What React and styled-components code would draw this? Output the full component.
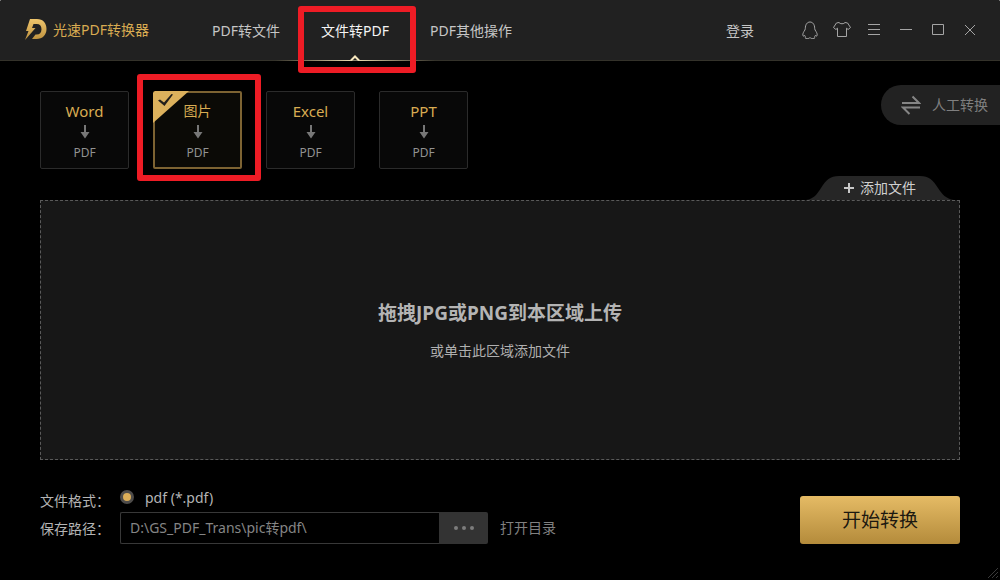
import React from "react";
import styled, { createGlobalStyle, css } from "styled-components";

const GlobalStyle = createGlobalStyle`
  *, *::before, *::after { box-sizing: border-box; }
  body { margin: 0; background: #fff; }
  body, button, input {
    font-family: "Noto Sans", "Noto Sans CJK SC", sans-serif;
    font-size: 14px;
  }
  button { padding: 0; border: 0; background: none; color: inherit; cursor: pointer; }
  svg { display: block; flex: none; }
`;

const Window = styled.div`
  position: relative;
  display: flex;
  flex-direction: column;
  min-height: 100vh;
  background: #000;
  border-radius: 2px 2px 0 0;
  line-height: 20px;
`;

const Header = styled.header`
  display: flex;
  align-items: stretch;
  height: 61px;
  padding: 0 14px 0 24px;
  background: #212121;
  border-bottom: 1px solid #34322a;
  border-radius: 2px 2px 0 0;
`;

const Brand = styled.div`
  display: flex;
  align-items: center;
  gap: 5px;
  width: 188px;
  color: #d9ac52;
`;

const Nav = styled.nav`
  display: flex;
  gap: 41px;
  flex: 1;
`;

const Tab = styled.a`
  position: relative;
  display: flex;
  align-items: center;
  padding-top: 2px;
  white-space: nowrap;
  text-decoration: none;
  color: ${(p) => (p.$active ? "#f4f4f4" : "#c6c6c6")};
`;

const TabMarker = styled.svg`
  position: absolute;
  left: 50%;
  bottom: -1px;
  transform: translateX(-50%);
`;

const Highlight = styled.span`
  position: absolute;
  z-index: 2;
  border: 6px solid #ee1c25;
  border-radius: 3px;
  pointer-events: none;
  inset: ${(p) => p.$inset};
`;

const Login = styled.button`
  margin-right: 40px;
  color: #c6c6c6;
`;

const WindowButtons = styled.div`
  display: flex;
`;

const IconButton = styled.button`
  display: grid;
  place-items: center;
  width: 32px;
  color: #a5a5a5;
`;

const Tools = styled.section`
  display: flex;
  justify-content: space-between;
  align-items: flex-start;
  padding: 24px 0 0 40px;
`;

const Cards = styled.div`
  display: flex;
  gap: 24px;
  padding-top: 6px;
`;

const Card = styled.button`
  position: relative;
  display: flex;
  flex-direction: column;
  align-items: center;
  width: 89px;
  height: 78px;
  padding-top: 10px;
  border: 1px solid #2b2b2b;
  border-radius: 2px;
  background: #080808;
  ${(p) =>
    p.$selected &&
    css`
      padding-top: 9px;
      border: 2px solid #7d6332;
      background: #0b0a06;
    `}
`;

const Source = styled.span`
  height: 20px;
  font-size: ${(p) => (p.$latin ? 15 : 14)}px;
  line-height: 18px;
  color: #d9ac52;
`;

const Target = styled.span`
  height: 20px;
  font-size: 12px;
  line-height: 20px;
  color: #929292;
`;

const ArrowIcon = styled.svg`
  margin: 3px 0 4px;
`;

const Corner = styled.svg`
  position: absolute;
  top: -2px;
  left: -2px;
`;

const ManualButton = styled.button`
  display: flex;
  align-items: center;
  gap: 11px;
  height: 40px;
  padding: 0 12px 0 20px;
  border-radius: 20px 0 0 20px;
  background: #222;
  line-height: 20px;
  color: #7f7f7f;
`;

const Main = styled.main`
  display: flex;
  flex-direction: column;
  flex: 1;
  padding: 7px 40px 0;
`;

const AddButton = styled.button`
  position: relative;
  display: flex;
  align-items: center;
  justify-content: center;
  align-self: flex-end;
  gap: 6px;
  width: 148px;
  height: 24px;
  margin-right: 6px;
  color: #d0d0d0;
`;

const AddShape = styled.svg`
  position: absolute;
  inset: 0;
`;

const AddLabel = styled.span`
  position: relative;
  line-height: 20px;
`;

const PlusIcon = styled.svg`
  position: relative;
`;

const DropZone = styled.button`
  display: flex;
  flex-direction: column;
  align-items: center;
  justify-content: center;
  gap: 16px;
  flex: 1;
  min-height: 260px;
  padding-top: 2px;
  border: 1px dashed #5a5a5a;
  background: #171717;
`;

const DropTitle = styled.strong`
  font-size: 19px;
  line-height: 24px;
  color: #b4b4b4;
`;

const DropHint = styled.span`
  line-height: 20px;
  color: #b0b0b0;
`;

const Footer = styled.footer`
  display: flex;
  justify-content: space-between;
  align-items: flex-end;
  padding: 24px 40px 36px;
`;

const Fields = styled.div`
  display: grid;
  grid-template-columns: 80px 1fr;
  grid-template-rows: 28px 32px;
  align-items: center;
`;

const FieldLabel = styled.label`
  padding-top: ${(p) => (p.$low ? 6 : 2)}px;
  color: #b4b4b4;
`;

const RadioLabel = styled.label`
  display: flex;
  align-items: center;
  gap: 11px;
  color: #b4b4b4;
`;

const Radio = styled.input`
  appearance: none;
  width: 14px;
  height: 14px;
  margin: 0 0 2px;
  border: 3px solid #4e4c4a;
  border-radius: 50%;
  background: #dcae58;
`;

const PathRow = styled.div`
  display: flex;
  align-items: center;
`;

const PathInput = styled.input`
  width: 319px;
  height: 32px;
  padding: 0 9px 2px;
  border: 1px solid #383838;
  border-right: 0;
  border-radius: 2px 0 0 2px;
  background: #000;
  color: #858585;
  outline: none;
`;

const BrowseButton = styled.button`
  display: grid;
  place-items: center;
  width: 49px;
  height: 32px;
  margin-right: 12px;
  border-radius: 0 2px 2px 0;
  background: #333;
`;

const OpenLink = styled.a`
  color: #808080;
  text-decoration: none;
`;

const StartButton = styled.button`
  width: 160px;
  height: 48px;
  padding-bottom: 2px;
  border-radius: 3px;
  background: linear-gradient(#e5bb65, #b48b3b);
  font-size: 19px;
  color: #1c1810;
`;

const Grip = styled.svg`
  position: absolute;
  right: 2px;
  bottom: 2px;
`;

const Logo = () => (
  <svg width="24" height="24" viewBox="0 0 24 24" aria-hidden="true">
    <defs>
      <linearGradient id="gold" x1="0" y1="0" x2="0" y2="1">
        <stop offset="0" stopColor="#efc56c" />
        <stop offset="1" stopColor="#bd913e" />
      </linearGradient>
    </defs>
    <path
      fill="url(#gold)"
      d="M6 1h7c6 0 9.500 4 9.500 10s-4 10-10 10H8l3.500-4.500h1.200c3 0 4.800-2 4.800-5.300S15.700 6 12.700 6H9.500L8 10h3.500L1 22l3.500-9H2z"
    />
  </svg>
);

const Arrow = () => (
  <ArrowIcon width="10" height="14" viewBox="0 0 10 14" aria-hidden="true">
    <path d="M4 0h2v7h3.500L5 13.500.5 7H4z" fill="#777" />
  </ArrowIcon>
);

const windowIcons = [
  {
    label: "QQ",
    art: (
      <path d="M4.300 7.600C4.300 3.400 6.300 1 9 1s4.700 2.400 4.700 6.600c0 1 .6 1.800 1.400 3 .9 1.400 1.400 3.200.9 4.200-.3.600-1 .1-1.500-.6-.3.900-.8 1.400-1.300 1.900.8.500.9 1.200-.3 1.400-1.500.3-3-.1-3.400-.6h-1c-.4.500-1.900.9-3.400.6-1.200-.2-1.100-.9-.3-1.400-.5-.5-1-1-1.300-1.900-.5.700-1.200 1.200-1.500.6-.5-1 0-2.800.9-4.200.8-1.200 1.400-2 1.400-3z" />
    ),
  },
  {
    label: "皮肤",
    art: (
      <path d="M6 1.500c.8 1.700 5.200 1.700 6 0l2.600.5 2.900 4.500-2.400 2-1.600-1.300v8.300h-9V7.200L2.900 8.500.5 6.500 3.400 2z" />
    ),
  },
  { label: "菜单", art: <path d="M3 3.500h12M3 8.500h12M3 13.500h12" /> },
  { label: "最小化", art: <path d="M3 8.500h12" /> },
  { label: "最大化", art: <path d="M3.500 3.500h11v10h-11z" /> },
  { label: "关闭", art: <path d="M4 4l10 10M14 4L4 14" /> },
];

const formats = [
  { name: "Word", latin: true },
  { name: "图片", latin: false },
  { name: "Excel", latin: true },
  { name: "PPT", latin: true },
];

export default function App() {
  return (
    <Window>
      <GlobalStyle />
      <Header>
        <Brand>
          <Logo />
          光速PDF转换器
        </Brand>
        <Nav>
          <Tab href="#from-pdf">PDF转文件</Tab>
          <Tab href="#to-pdf" $active aria-current="page">
            文件转PDF
            <TabMarker width="160" height="6" viewBox="0 0 160 6" aria-hidden="true">
              <defs>
                <linearGradient id="fade">
                  <stop offset="0" stopColor="#e9d6a4" stopOpacity="0" />
                  <stop offset=".5" stopColor="#f2e2b6" />
                  <stop offset="1" stopColor="#e9d6a4" stopOpacity="0" />
                </linearGradient>
              </defs>
              <rect y="5" width="160" height="1" fill="url(#fade)" />
              <path d="M76 5.500l4-4 4 4" fill="#212121" stroke="#f6e6bd" strokeWidth="2" />
            </TabMarker>
            <Highlight $inset="6px -27px -13px -23px" />
          </Tab>
          <Tab href="#more">PDF其他操作</Tab>
        </Nav>
        <Login type="button">登录</Login>
        <WindowButtons>
          {windowIcons.map((icon) => (
            <IconButton key={icon.label} type="button" aria-label={icon.label}>
              <svg width="18" height="18" viewBox="0 0 18 18" fill="none" stroke="currentColor">
                {icon.art}
              </svg>
            </IconButton>
          ))}
        </WindowButtons>
      </Header>

      <Tools>
        <Cards>
          {formats.map(({ name, latin }) => {
            const selected = name === "图片";
            return (
              <Card key={name} type="button" $selected={selected} aria-pressed={selected}>
                {selected && (
                  <Corner width="36" height="32" viewBox="0 0 36 32" aria-hidden="true">
                    <path d="M2 0h34L0 32V2z" fill="#dcb15c" />
                    <path d="M5 9.500l2-1 4 3L18.500 3l1.500.6L11.500 15z" fill="#221f1b" />
                  </Corner>
                )}
                <Source $latin={latin}>{name}</Source>
                <Arrow />
                <Target>PDF</Target>
                {selected && <Highlight $inset="-19px -21px -14px -18px" />}
              </Card>
            );
          })}
        </Cards>
        <ManualButton type="button">
          <svg width="20" height="20" viewBox="0 0 20 20" aria-hidden="true">
            <path d="M1 8h17L11.500 1.500M19 12.500H2L8.500 19" fill="none" stroke="#858585" strokeWidth="2" />
          </svg>
          人工转换
        </ManualButton>
      </Tools>

      <Main>
        <AddButton type="button">
          <AddShape width="148" height="24" viewBox="0 0 148 24" aria-hidden="true">
            <path
              d="M0 24C8 23 11 18 15 12 20 4 24 0 33 0h81c9 0 13 4 18 12 4 6 8 11 16 12z"
              fill="#262626"
            />
          </AddShape>
          <PlusIcon width="10" height="10" viewBox="0 0 10 10" aria-hidden="true">
            <path d="M5 0v10M0 5h10" stroke="#c8c8c8" strokeWidth="2" />
          </PlusIcon>
          <AddLabel>添加文件</AddLabel>
        </AddButton>
        <DropZone type="button">
          <DropTitle>拖拽JPG或PNG到本区域上传</DropTitle>
          <DropHint>或单击此区域添加文件</DropHint>
        </DropZone>
      </Main>

      <Footer>
        <Fields>
          <FieldLabel htmlFor="format-pdf" $low>
            文件格式：
          </FieldLabel>
          <RadioLabel>
            <Radio type="radio" id="format-pdf" name="format" defaultChecked />
            pdf (*.pdf)
          </RadioLabel>
          <FieldLabel htmlFor="save-path">保存路径：</FieldLabel>
          <PathRow>
            <PathInput id="save-path" type="text" defaultValue={"D:\\GS_PDF_Trans\\pic转pdf\\"} />
            <BrowseButton type="button" aria-label="浏览">
              <svg width="22" height="4" viewBox="0 0 22 4" fill="#7c7c7c" aria-hidden="true">
                <circle cx="3" cy="2" r="2" />
                <circle cx="11" cy="2" r="2" />
                <circle cx="19" cy="2" r="2" />
              </svg>
            </BrowseButton>
            <OpenLink href="#open">打开目录</OpenLink>
          </PathRow>
        </Fields>
        <StartButton type="button">开始转换</StartButton>
      </Footer>
      <Grip width="10" height="10" viewBox="0 0 10 10" aria-hidden="true">
        <path d="M0 10L10 0M4 10l6-6M8 10l2-2" stroke="#3a3a3a" fill="none" />
      </Grip>
    </Window>
  );
}
